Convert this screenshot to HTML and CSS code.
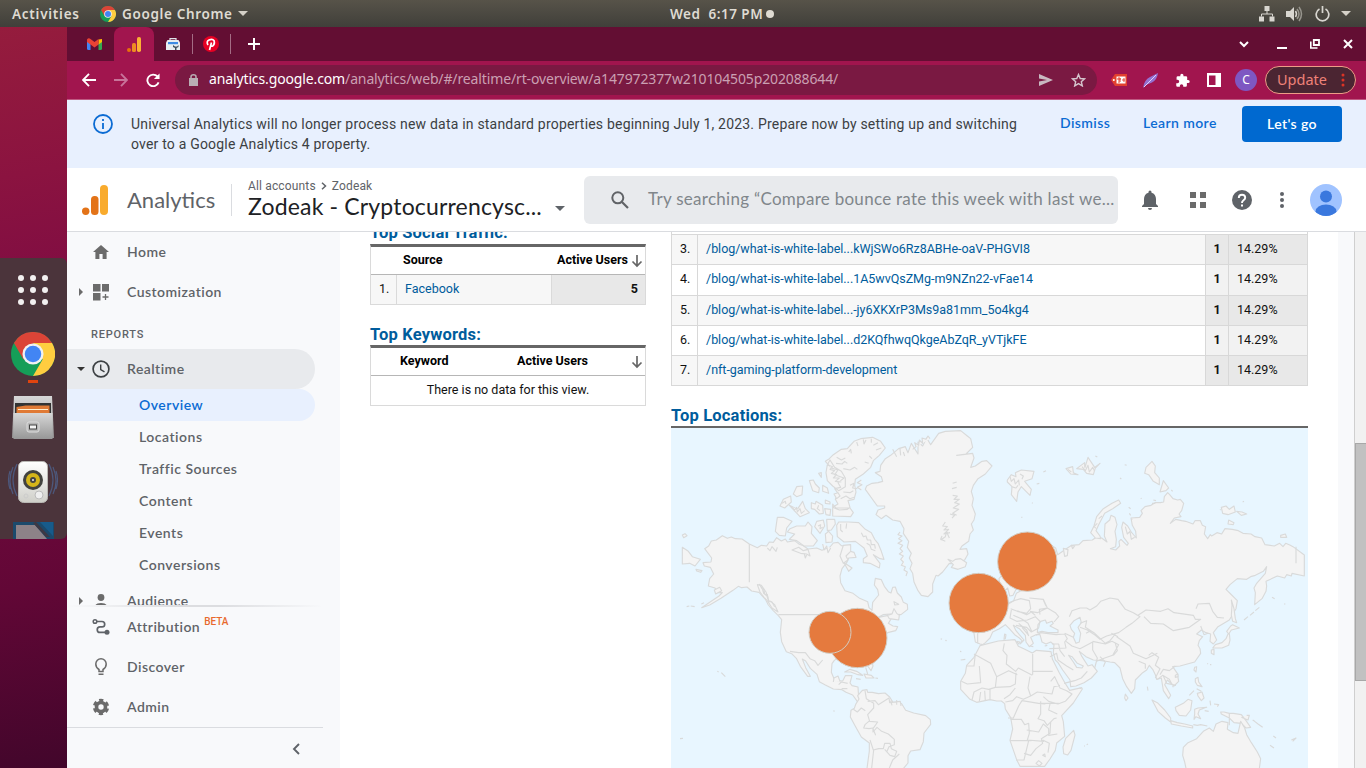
FILE: index.html
```html
<!DOCTYPE html>
<html lang="en">
<head>
<meta charset="utf-8">
<title>Analytics</title>
<link rel="stylesheet" href="styles.css">
</head>
<body>
<svg width="0" height="0" class="defs">
  <defs>
    <symbol id="chrome" viewBox="0 0 48 48">
      <circle cx="24" cy="24" r="24" fill="#159e58"/>
      <path d="M24 12H44.800A24 24 0 0 1 24 48L34.500 30Z" fill="#ffcd40"/>
      <path d="M3.200 12L13.600 30L24 24L24 12H44.800A24 24 0 0 0 3.200 12Z" fill="#db4437"/>
      <circle cx="24" cy="24" r="11.500" fill="#f1f1f1"/>
      <circle cx="24" cy="24" r="9" fill="#4285f4"/>
    </symbol>
    <symbol id="down" viewBox="0 0 12 14"><path d="M6 1V12M1.500 7.500L6 12L10.500 7.500" fill="none" stroke="#666" stroke-width="1.700"/></symbol>
  </defs>
</svg>

<header class="system">
  <span class="act">Activities</span>
  <svg class="sys-chrome" width="16" height="16"><use href="#chrome"/></svg>
  <span class="app">Google Chrome</span>
  <i class="tri light"></i>
  <span class="clock">Wed&nbsp; 6:17 PM<b></b></span>
  <div class="tray">
    <svg width="16" height="16" viewBox="0 0 16 16"><path d="M5.500 0h5v5h-5zM0 10.500h5v5H0zM10.500 10.500h5v5h-5z" fill="#d8d6d0"/><path d="M8 5v3M2.500 10.500V8h11v2.500" fill="none" stroke="#d8d6d0"/></svg>
    <svg width="17" height="16" viewBox="0 0 17 16"><path d="M0 5h4l4-4v14l-4-4H0z" fill="#d8d6d0"/><path d="M9.500 5q2 3 0 6" fill="none" stroke="#d8d6d0" stroke-width="1.500"/><path d="M11 3q4 5 0 10M13 1q5 7 0 14" fill="none" stroke="#97958d" stroke-width="1.500"/></svg>
    <svg width="15" height="16" viewBox="0 0 15 16"><path d="M4.500 3A6.300 6.300 0 1 0 10.500 3M7.500 0v7" fill="none" stroke="#d8d6d0" stroke-width="1.700"/></svg>
    <i class="tri light"></i>
  </div>
</header>

<div class="desktop">
  <aside class="launcher">
    <div class="dock">
      <svg width="67" height="281" viewBox="0 258 67 281">
        <defs>
          <linearGradient id="cab" x2="0" y2="1"><stop stop-color="#d7d7d7"/><stop offset="1" stop-color="#979797"/></linearGradient>
          <linearGradient id="spk" x2="0" y2="1"><stop stop-color="#fff"/><stop offset="1" stop-color="#cfcfc9"/></linearGradient>
        </defs>
        <g fill="#f2f0f0"><circle cx="21" cy="278" r="3"/><circle cx="33" cy="278" r="3"/><circle cx="45" cy="278" r="3"/><circle cx="21" cy="290" r="3"/><circle cx="33" cy="290" r="3"/><circle cx="45" cy="290" r="3"/><circle cx="21" cy="302" r="3"/><circle cx="33" cy="302" r="3"/><circle cx="45" cy="302" r="3"/></g>
        <use href="#chrome" x="11" y="332" width="44" height="44"/>
        <path d="M28 380h10v3H28z" fill="#e0440f"/>
        <path d="M14 396h38l2 42H12z" fill="url(#cab)"/><path d="M15 403h36v11H15z" fill="#333"/><path d="M16.500 407l9-1.500h24v8h-33z" fill="#e07a35"/><path d="M18 409.500h30" stroke="#fff0d0"/>
        <path d="M13.500 413h39v26h-39z" fill="url(#cab)"/><rect x="27" y="422" width="12" height="10" rx="2" fill="#b5b5b5" stroke="#ddd"/><rect x="29.500" y="425" width="7" height="4" fill="#f4f4f4" stroke="#444"/>
        <g fill="none" stroke="#4d587c" stroke-width="1.200"><path d="M17 464q-8 16 0 32M13 467q-6 14 0 27M10 471q-3 9 0 18M49 464q8 16 0 32M53 467q6 14 0 27M56 471q3 9 0 18"/></g>
        <rect x="18.500" y="461.500" width="29" height="41" rx="5" fill="url(#spk)" stroke="#b9b8b4"/>
        <circle cx="33" cy="480" r="10" fill="#42423f"/><circle cx="33" cy="480" r="7" fill="#d5b51a"/><circle cx="33" cy="480" r="3" fill="#444"/><circle cx="33" cy="480" r="1" fill="#eee"/>
        <circle cx="39" cy="495" r="4" fill="#eee" stroke="#bbb"/><circle cx="26" cy="496" r="2" fill="none" stroke="#ccc"/>
        <path d="M13 539V522h41v17z" fill="#1c4a6c"/><path d="M16 539V525h19l12 14z" fill="#8d8288"/><path d="M36 522l14 15h-4L33 523z" fill="#3d3844"/><path d="M40 522h13v14z" fill="#175b8b"/>
      </svg>
    </div>
  </aside>

  <section class="browser">
    <div class="tabs">
      <div class="tab"><svg width="15" height="12" viewBox="0 0 15 12"><path d="M0 2v8.500Q0 12 1.500 12H3.500V5z" fill="#4285f4"/><path d="M15 2v8.500Q15 12 13.500 12h-2V5z" fill="#34a853"/><path d="M11.500 1.500L15 1v3l-3.500 2.500z" fill="#fbbc04"/><path d="M0 4V1.500Q1.500-.5 3.500 1l4 3 4-3V6.500l-4 3-4-3z" fill="#ea4335"/></svg></div>
      <div class="tab active"><svg width="14" height="15" viewBox="0 0 14 15"><circle cx="2" cy="13" r="2" fill="#e8710a"/><rect x="5" y="6" width="4" height="9" rx="1.500" fill="#ed8b22"/><rect x="10" y="0" width="4" height="15" rx="1.800" fill="#fbb034"/></svg></div>
      <div class="tab line"><svg width="14" height="12" viewBox="0 0 14 12"><path d="M4 2.500V.6h6v1.900" fill="none" stroke="#dfe5ea" stroke-width="1.200"/><path d="M1.500 2h11L14 4.500V12H0V4.500z" fill="#e8edf1"/><path d="M2 4h10v2.200H2z" fill="#3d8ae4"/><path d="M7 7v2l2 1v2h1.500v-2l2-1V7l-1.500 1.500h-2z" fill="#3f4f5d"/></svg></div>
      <div class="tab line"><svg width="16" height="16" viewBox="0 0 16 16"><circle cx="8" cy="8" r="8" fill="#e60023"/><path d="M6.500 14L8.500 6.500M5 9Q3 5.500 6 4.100Q9.500 2.500 11.100 4.700Q12 8 10 9.700Q8.500 10.800 7.500 9.500" fill="none" stroke="#fff" stroke-width="1.700"/></svg></div>
      <svg class="plus" width="12" height="12" viewBox="0 0 12 12"><path d="M6 0v12M0 6h12" stroke="#fff" stroke-width="2"/></svg>
      <div class="winctl">
        <svg width="10" height="12" viewBox="0 0 10 12"><path d="M1 4l4 4 4-4" fill="none" stroke="#fff" stroke-width="2"/></svg>
        <svg width="10" height="12" viewBox="0 0 10 12"><path d="M0 10h10" stroke="#fff" stroke-width="2"/></svg>
        <svg width="10" height="12" viewBox="0 0 10 12"><path d="M3.800 2h5.200v5H3.800z" fill="none" stroke="#fff" stroke-width="1.800"/><path d="M.8 3.500V10H7.500" fill="none" stroke="#fff" stroke-width="1.600"/></svg>
        <svg width="10" height="12" viewBox="0 0 10 12"><path d="M1 2l8 8M9 2l-8 8" stroke="#fff" stroke-width="2"/></svg>
      </div>
    </div>

    <div class="toolbar">
      <svg class="nav-i" width="14" height="14" viewBox="0 0 14 14"><path d="M14 7H1.500M7 .8L1 7l6 6.200" fill="none" stroke="#fff" stroke-width="1.900"/></svg>
      <svg class="nav-i" width="14" height="14" viewBox="0 0 14 14"><path d="M0 7h12.500M7 .8L13 7l-6 6.200" fill="none" stroke="#c8749a" stroke-width="1.900"/></svg>
      <svg class="nav-i" width="14" height="15" viewBox="0 0 15 15"><path d="M12.300 3.200A6.200 6.200 0 1 0 13.500 9.500" fill="none" stroke="#fff" stroke-width="2"/><path d="M14.500 0v6h-6z" fill="#fff"/></svg>
      <div class="omni">
        <svg width="9" height="12" viewBox="0 0 9 12"><path d="M0 4h9v8H0z" fill="#b9aeb4"/><path d="M2 4.500V2.700Q2 .8 4.500.8T7 2.700V4.500" fill="none" stroke="#b9aeb4" stroke-width="1.500"/></svg>
        <span class="url"><b>analytics.google.com</b>/analytics/web/#/realtime/rt-overview/a147972377w210104505p202088644/</span>
        <svg class="send" width="14" height="12" viewBox="0 0 14 12"><path d="M0 0l14 6L0 12V7.500L8 6 0 4.500z" fill="#c9b9c1"/></svg>
        <svg width="15" height="14" viewBox="0 0 15 14"><path d="M7.500 1.500l1.700 4 4.300.4-3.200 2.800 1 4.200-3.800-2.300L3.700 12.900l1-4.200L1.500 5.900l4.300-.4z" fill="none" stroke="#d5c5cd" stroke-width="1.400"/></svg>
      </div>
      <svg class="e1" width="16" height="12" viewBox="0 0 16 12"><path d="M0 6l4-6h12v12H4z" fill="#e2402f"/><path d="M5.500 2.500h9v7h-9z" fill="#fff"/><path d="M7 4h2v2H7V4M9 4v4H7M13.200 4.500v3L11.500 6z" fill="none" stroke="#e2402f"/><circle cx="2.800" cy="6" r="1" fill="#fff"/></svg>
      <svg class="e2" width="15" height="15" viewBox="0 0 15 15"><path d="M0 15Q1 7 7 4L15 0Q14 7 9 9.500L3 12z" fill="#9471d0"/><path d="M1 14L13 2" stroke="#ded0fa"/></svg>
      <svg class="e3" width="15" height="15" viewBox="0 0 24 24"><path d="M21 11h-1.500V7a2 2 0 0 0-2-2h-4V3.500a2.500 2.500 0 0 0-5 0V5h-4a2 2 0 0 0-2 2v3.800H4a2.700 2.700 0 0 1 0 5.400H2V20a2 2 0 0 0 2 2h3.800v-1.500a2.700 2.700 0 0 1 5.400 0V22H17a2 2 0 0 0 2-2v-4h2a2.500 2.500 0 0 0 0-5z" fill="#fff"/></svg>
      <svg class="e4" width="14" height="14" viewBox="0 0 14 14"><path d="M0 0h14v14H0zM2 2.500v9.500h6.500V2.500z" fill="#fff" fill-rule="evenodd"/></svg>
      <span class="profile">C</span>
      <span class="update">Update<svg width="4" height="14" viewBox="0 0 4 14"><g fill="#dc3326"><circle cx="2" cy="2" r="1.500"/><circle cx="2" cy="7" r="1.500"/><circle cx="2" cy="12" r="1.500"/></g></svg></span>
    </div>

    <div class="notice">
      <svg width="20" height="20" viewBox="0 0 20 20"><circle cx="10" cy="10" r="9" fill="none" stroke="#0b6bd3" stroke-width="1.800"/><path d="M10 9v6M10 5v2" stroke="#0b6bd3" stroke-width="1.800"/></svg>
      <p>Universal Analytics will no longer process new data in standard properties beginning July 1, 2023. Prepare now by setting up and switching<br>over to a Google Analytics 4 property.</p>
      <a class="dismiss">Dismiss</a><a class="learn">Learn more</a><button>Let's go</button>
    </div>

    <div class="appbar">
      <svg class="logo" width="26" height="30" viewBox="0 0 26 30"><circle cx="3.700" cy="26.300" r="3.700" fill="#e37318"/><rect x="9" y="11" width="7.500" height="19" rx="3.500" fill="#e37318"/><rect x="18" y="0" width="8" height="30" rx="4" fill="#f9ab2d"/></svg>
      <span class="brand">Analytics</span>
      <div class="account">
        <div class="crumbs">All accounts <svg width="6" height="8" viewBox="0 0 6 8"><path d="M1 .8L4.500 4 1 7.200" fill="none" stroke="#5f6368" stroke-width="1.500"/></svg> Zodeak</div>
        <div class="prop">Zodeak - Cryptocurrencysc...</div>
      </div>
      <i class="tri dark"></i>
      <div class="search"><svg width="18" height="18" viewBox="0 0 18 18"><circle cx="6.800" cy="6.800" r="5.500" fill="none" stroke="#606367" stroke-width="2"/><path d="M11 11l6 6" stroke="#606367" stroke-width="2.200"/></svg><span>Try searching “Compare bounce rate this week with last we...</span></div>
      <svg class="bell" width="16" height="20" viewBox="0 0 16 20"><path d="M8 20a2 2 0 0 0 2-2H6a2 2 0 0 0 2 2zm6-6V9c0-3-1.600-5.600-4.500-6.300V2a1.500 1.500 0 0 0-3 0v.7C3.600 3.400 2 6 2 9v5l-2 2v1h16v-1z" fill="#5f6368"/></svg>
      <svg class="squares" width="16" height="16" viewBox="0 0 16 16"><path d="M0 0h6v6H0zM10 0h6v6h-6zM0 10h6v6H0zM10 10h6v6h-6z" fill="#6b6b6b"/></svg>
      <svg class="help" width="20" height="20" viewBox="0 0 20 20"><circle cx="10" cy="10" r="10" fill="#5f6368"/><path d="M6.800 8Q6.800 4.800 10 4.800T13.200 7.700Q13.200 9 11.500 10.200T10 13" fill="none" stroke="#fff" stroke-width="1.900"/><path d="M9 14.500h2v2H9z" fill="#fff"/></svg>
      <svg class="more" width="4" height="16" viewBox="0 0 4 16"><g fill="#5f6368"><circle cx="2" cy="2" r="2"/><circle cx="2" cy="8" r="2"/><circle cx="2" cy="14" r="2"/></g></svg>
      <svg class="avatar" width="32" height="32" viewBox="0 0 32 32"><defs><clipPath id="av"><circle cx="16" cy="16" r="16"/></clipPath></defs><g clip-path="url(#av)"><path d="M0 0h32v32H0z" fill="#a0c3ff"/><circle cx="16" cy="12.500" r="6" fill="#3a78de"/><ellipse cx="16" cy="27.500" rx="10.500" ry="7" fill="#3a78de"/></g></svg>
    </div>

    <div class="main">
      <nav class="side">
        <div class="side-scroll">
          <div class="item"><i class="arrow"></i><svg width="18" height="18" viewBox="0 0 18 18"><path d="M9 2l8 7h-2.400v7h-4v-5H7.400v5h-4V9H1z" fill="#6b6b6b"/></svg><span>Home</span></div>
          <div class="item"><i class="arrow closed"></i><svg width="18" height="18" viewBox="0 0 18 18"><path d="M1 1h7.500v7.500H1zM10 1h7v7.500h-7zM1 10h7.500v7.500H1z" fill="#6b6b6b"/><path d="M13.500 11v6M10.500 14h6" stroke="#6b6b6b" stroke-width="1.300"/></svg><span>Customization</span></div>
          <div class="section">REPORTS</div>
          <div class="item open"><i class="arrow downward"></i><svg width="18" height="18" viewBox="0 0 18 18"><circle cx="9" cy="9" r="7.900" fill="none" stroke="#3c4043" stroke-width="1.700"/><path d="M8.700 4.500v5l3.800 2.300" fill="none" stroke="#3c4043" stroke-width="1.400"/></svg><span>Realtime</span></div>
          <div class="sub current">Overview</div>
          <div class="sub">Locations</div>
          <div class="sub">Traffic Sources</div>
          <div class="sub">Content</div>
          <div class="sub">Events</div>
          <div class="sub">Conversions</div>
          <div class="item"><i class="arrow closed"></i><svg width="18" height="18" viewBox="0 0 18 18"><circle cx="9" cy="5.500" r="3.400" fill="#6b6b6b"/><path d="M3 15q0-4 6-4t6 4z" fill="#6b6b6b"/></svg><span>Audience</span></div>
        </div>
        <div class="fade"></div>
        <div class="item"><i class="arrow"></i><svg width="18" height="18" viewBox="0 0 18 18"><path d="M4.500 3.500H10a2.700 2.700 0 0 1 0 5.400H8a2.700 2.700 0 0 0 0 5.500h6" fill="none" stroke="#5f6368" stroke-width="1.700"/><circle cx="3" cy="3.500" r="1.800" fill="#f8f9fb" stroke="#5f6368" stroke-width="1.500"/><circle cx="15" cy="14.300" r="2.500" fill="#5f6368"/></svg><span>Attribution <sup>BETA</sup></span></div>
        <div class="item"><i class="arrow"></i><svg width="18" height="18" viewBox="0 0 18 18"><path d="M7 13.500v-2Q3.800 9.700 3.800 6a5.200 5.200 0 0 1 10.400 0Q14.200 9.700 11 11.500v2zM6.500 16.300h5" fill="none" stroke="#6b6b6b" stroke-width="1.500"/></svg><span>Discover</span></div>
        <div class="item"><i class="arrow"></i><svg width="18" height="18" viewBox="0 0 18 18"><circle cx="9" cy="9" r="4.500" fill="none" stroke="#6b6b6b" stroke-width="3.600"/><circle cx="9" cy="9" r="6.800" fill="none" stroke="#6b6b6b" stroke-width="2.800" stroke-dasharray="4.120 3" stroke-dashoffset="-1.500"/></svg><span>Admin</span></div>
        <div class="collapse"><svg width="8" height="12" viewBox="0 0 8 12"><path d="M7 1L2 6l5 5" fill="none" stroke="#5f6368" stroke-width="1.900"/></svg></div>
      </nav>

      <div class="content">
        <div class="left">
          <h2>Top Social Traffic:</h2>
          <div class="table">
            <div class="thead"><span class="c-src">Source</span><span class="c-act">Active Users</span><svg width="12" height="14"><use href="#down"/></svg></div>
            <div class="trow"><span class="n">1.</span><a class="k">Facebook</a><b class="v">5</b></div>
          </div>
          <h2 class="kw">Top Keywords:</h2>
          <div class="table">
            <div class="thead key"><span class="c-key">Keyword</span><span class="c-act">Active Users</span><svg width="12" height="14"><use href="#down"/></svg></div>
            <div class="none">There is no data for this view.</div>
          </div>
        </div>
        <div class="right">
          <div class="pages">
            <div class="page"><span>3.</span><a>/blog/what-is-white-label...kWjSWo6Rz8ABHe-oaV-PHGVI8</a><b>1</b><em>14.29%</em></div>
            <div class="page"><span>4.</span><a>/blog/what-is-white-label...1A5wvQsZMg-m9NZn22-vFae14</a><b>1</b><em>14.29%</em></div>
            <div class="page"><span>5.</span><a>/blog/what-is-white-label...-jy6XKXrP3Ms9a81mm_5o4kg4</a><b>1</b><em>14.29%</em></div>
            <div class="page"><span>6.</span><a>/blog/what-is-white-label...d2KQfhwqQkgeAbZqR_yVTjkFE</a><b>1</b><em>14.29%</em></div>
            <div class="page"><span>7.</span><a>/nft-gaming-platform-development</a><b>1</b><em>14.29%</em></div>
          </div>
          <h2 class="loc">Top Locations:</h2>
          <svg class="map" width="637" height="340" viewBox="3 24 1911 1020">
            <g fill="#f4f4f4" stroke="#d9dada" stroke-width="3.400" stroke-linejoin="round">
              <!-- North America -->
              <path d="M104 386l12-8 8-15 15-3 18-13 15 8 12-4 12 5 20 1 22 15 24 11 12-7 16 2 8-12 12 1 10-14 14 10 12-6 6 9 22-4 14 11 12 4 14 10 26-3 16 7 24-10 10-12 14-2 10 10 16 2 8 14 14 4 6 15-22 2-6 14-14 18-6 22 2 20 13 24 24 8 20 15 24 10 4 18 9 8 2-24 8-10 10-12-3-16-10-14 3-20 18 4 9 20 12 16 8 4 5-17 8-1 6 18 12 12 6 16 12 6 1 15-20 16-32-2-22 2-14 8 30-6 10 8-10 16 14 8 14 2-6 12-24 6-14 14-6 18-16 12-10 14-4 16 6 26-6 14-10-14-4-16-34-4-28 2-22-8-12 9-7 10-2 26 10 24 24 2 8-16 20 0-6 22 6 8 18 4 2 32 12 12 14-2 10 8-12 4-14-6-12-2-16-22-20-8-12-8-26-2-24-12-18-10-7-22-20-18-14-22-10-6 10 26 14 26-8 0-22-30-12-24-14-14-16-6-14-30-4-28 4-38-10-12-16-16-14-16-8-16-20-22-22-4-14-12-16 2-10-4-16 12-36 24-34 20-24 8 22-15 30-20 10-10-14 0-8-14-20-6 4-22 12-14-10-20-18-4-4-10 24-2 2-12z"/>
              <path d="M37 382l18 12 12 16 24 8-16 20-16-8-22 2zM37 345l8-4 6 6-10 6zM78 448l18 4-4 5-12-4zM133 510l16-8 6 10-18 10zM262 494l12 2 14 20 8 24 18 14 10 22-18-12-14-22-10-10-12-16z"/>
              <path d="M238 372V487M325 584H545M360 694l26 4 20 0 14 18 14 6 10 14 14-16M490 786l2-12 12-6 6 16M506 794l8-8 19 4M515 806l17 0"/>
              <path d="M268 492l8 14 6 2 2 14 8 2 4 18 10 4 8 14M275 500l6 20 10 8 6 20M292 384l8 8 6-12 12 14 4-12M402 398l4 16 4-10M458 372l4 18 8-12 4 20 8-14"/>
              <!-- Canadian islands -->
              <path d="M490 104l24-16 18-2 20-22 20-8 36-4 24 12 14 20-18 22-18 16-8 20-22 20-24 16-2 18 4 20-6 22-18 4 6 20-8 6-24 2-20-8 16-10-8-14 8-18-10-14 18-4-8-14 18-14-28-10 10-14-20-6-18-20 12-8zM480 120l14 22 20 12 12 20 0 26-20 12-18-14-16-16-4-24 4-24zM488 252l10 12 42 0 10 14-8 12-54-2zM418 182l12-2 6 12 12 12-2 14-18-6zM458 196l14 8 4 16-18-6zM370 222l10-22 18-2-2 26-16 6zM330 258l10-20 22-10 2 18-20 18zM358 256l24 12 16-24 8 22 12 12-28 12zM424 248l12 4 2-8 20 12 2 24-12 2-14-14-10-2zM466 240l14 6 0 6-14-2zM464 266l18 2-2 18-12-2zM322 292l18 0 26 12-16 20-4 24-18-2-12-12z"/>
              <path d="M360 326l20-8 26 0 8-12 12 14-2 20 18 22-12 16-28 0-22-16-22-4 16-16-22-6zM440 304l20-4 4 18-14 22-16-20zM470 298l24 0 2 14-12 18-12 2zM466 342l10-8 12 14-2 18-18 2zM500 316l6-10 30 0 30 2 20 20 18 10 10 20 10 12 10 24 8 24-12-2-20-12 20 26-2 14-28-14-20-2 0-12 12-8-10-24-18-14-8-6-34 2-20-16zM520 376l22-2 0 20-14 14 6 12-14 10-10-22zM522 428l12 8 12 8-10 10zM366 390l20-8 14 10 14-4 6 20-10-6-18-2zM492 222l12-4 6 10-10 8zM446 160l8-2 0 14z"/>
              <path d="M500 112l14 8 12-6M498 130l18 2 8-8 8 6M520 146l20 4 14-8 8 6M536 96l6-8 2 12M560 66l4 12M580 58l2 14 6-12M604 56l0 12M624 68l-14 8M634 84l-16 6M606 116l-8-8M596 130l-12-4M574 180l-12 8 14 6-14 8 12 8M540 196l12-6-4 14 14 2M520 216l20 2 10-6M512 236l16-8 12 8 12-4M476 136l12 4-8 8 14 4-10 8 16 4-10 10 18 0-12 10 18 2M574 338l6 12 8-2 4 12 10 0 2 14 10 0 2 12M590 370l10 6 4 12 12 4M512 312l0 18 6 6M530 310l-2 16M366 262l8 8 6-8 2 14 8-10 4 14 10-8M336 250l10-6 2 8M446 256l-4 10 8 6M444 318l8-4-2 12 8-4"/>
              <path d="M652 586l14-4 6-16 8 14 8 6-2 14-12-2-16-2zM672 545l14 8-12 2zM524 756l16-8 20 6 18 12-14-2-22-8zM582 762l22 4 8 8-24 0zM558 776l14 2M616 774l8 1M587 742l6 20M580 726l4 4M142 754l4 2M154 758l12 12M490 872l4 2M30 956l9-1"/>
              <!-- Greenland -->
              <path d="M586 208l4-10 16-8 18-2 14-4-4-14-18-12 14-4 2-18 14-20 16-10 24-20 20-6 8 18 10-28 20 32 0-36 14 12 12-24 12 20 24-34 20-6 46-2 20 16 10 8 6 26-20 20-28 4 48-6 4 14-10 28 14-4 20-14 14-2 16 16-20 24-22 14-14 20-6 18 6 22-4 20 10 26-4 18-8 12 6 18-10 12-4 22-20 14-6 10 20-2 4 16-10 18-30 12-16-2-20 26-14 12-6-2-10 26 0 24-14 14-20-4-10-14-12-26-4-26-8-14 6-16-8-16 6-14-12-18 4-18-16-24 2-14-12-22-22-4-20-14-14 10-16-12 6-14 20-6 0-6-22 0z"/>
              <path d="M834 418l14 6 8-6 16-2 18 12-4 12-22 8-20-6 6-8zM690 336l-6 8 12 4-10 8 10 6-12 8 14 6-8 10 8 8-10 8 12 6-8 10 8 8-6 10 12 4-4 10 10 6-4 12M826 306l-8 12 14 2-10 10 14-2-14 14 18-4M812 360l14-10 4-14 8 18M816 348l-4 10 14 6M848 190l12-4M846 206l14-4M848 226l14 2-10 10 16 0-14 10 14 4-18 12 16 4-18 12 12 6M840 282l14 4-8 8M728 88l10-8-4-12 12 8 2-16 10 10-2-16 12 4 6-10 6 8M700 96l4 12M668 88l12 22M690 86l2 20"/>
              <!-- South America -->
              <path d="M563 827l14-16 14-2 2 8 14 0 18 4 20-2 14 12 10 16 26 4 12 20 24 8 36 8 14 12 1 14-20 26-2 26-10 24-28 4-8 14 0 22-20 24H590l8-60 0-24-24-18-18-32-15-28 2-20 10-6 4-12 10-16z"/>
              <path d="M585 812l4 24 22 14 0 14-18 20 6 20 24 2-14 20 8 20M593 844l22-2 10 12 32-20 2 14 32-4 2 14M662 842l4 14M680 840l0 14M550 868l12 8 12-12 12 8M599 902l-14 12-4 10 16 2 12-2 0 12 12-14 14 12 20 8 18 16 0 16-16 6-6 14M600 960l10 30 16-4 14 0 4-16 16 0 4 16 16 8-6 16-14-4-16-18M658 1044l10-24 20-18M611 990l-6 54"/>
              <!-- Eurasia -->
              <path d="M912 640l4 26 14 6 8 2 8-6 14-14 8-18 20-10 18-12 14 14 14 16 14 10 8 8-6 10 12-12-14-16-10-12-8-16 18 10 18 20 2 20 10 14 12-10-8-18 16-8 12 0 6 22 12 6 14-6 10 8-2 24 6 22 8 8 14 22 22 30 2 20 16-2 24-10 22-14 18-20-16-20-12 4-18-28-8-16 20 16 22 10 26 2 24 4 14 2 16 16 8 32 12 24 14 20 10-14 2-26 22-22 12-8 8-14 10 12 8 16 4 14 14-4 6 38 16 24 6-10-10-18-8-14 8-14 20 18 14-14-4-24-14-20 22-2 44-12 18-26-2-14-6-10 4-14 10-12-18-8 14-12 14 8 14 4-2 22 10 8 10-12-10-22 14-18 34-20 20-34 4-24-20-20-14-14 12-14 22-18 28 2 12-8 14-4 24-12 10-14-4 20-26 30-8 14 4 14-2 36 22-18 12-22 2-16-2-14 34-16 22 6 6-10 14 4 2-8 37 8V405l-34-25-8-4-14-6-8 10-10-10-16 8-28-4-10-20-20-4-12-8-24-2-14-8-18-4-22-2-10 16-14-4-16 10-4-4-8 12-10-14 4-22-10-4-6-14-16 0-6 10-22-8-12-2-18-4-16 12 12-16 20-4-6-8 8-10 6-22-10-12-8 2-14-4-10-12-6-6-10 12-2 16-10 2-16 0-12 8-18 4-12 12 4 8-8 12-26 2 4 22 10 18 2 20-14-16-12-20-14-12-4 16 6 30 14 18-4 6-18-18-6 6 2 14-12 12-16-4 16-6 2-22-4-24 6-20-6-22-12-6-4 14-14 12-2 36 8 18-16-12-14-4-14 10-28 2-12 12-22 2-16 10-26 18-6-20-20-12-38-16-40 20-30 40-28 44-14 16 4 28 14 8 8-8 6 24 10-2 10-20 14-18 22-12 28 8 14 14-30 4-34 10-14 8-8 22-16 10-12 2-8 14-20 4-18 6-14 10 8 12-2 16-28 10-14-6z"/>
              <g fill="#e8f6ff"><path d="M1104 614l8-10 14-4 4 10 16-6 4 6-10 8 24 12 0 8-30 0-18-4-14 4zM1200 616l12-14 18-10 4 16-10 14 8 18-4 26-10 4-8-18 4-12-10-12zM1196 706l10 4 16 20 18 8-4 6-16-2-10-16z"/></g>
              <!-- Africa -->
              <path d="M930 677l-18 35-22 24-4 24-14 24 0 24 28 30 20 9 40-8 20 4 14 0 10 8 2 16 16 26 6 34-8 34 20 58 10 20h74l16-22 16-26 4-22 24-20-4-44-5-18 35-38 27-42-2-4-36 8-14-22-18-32-20-40-4-22-44-4-12 8-24-12-18-8-10-20-50 4zM1211 931l4 14-12 46-10 14-12-4-2-20 8-26z"/>
              <path d="M888 738h24l4-36M928 738l4 50-40 4-18-8M912 702l50 28 18 40 36-18 26 12M1003 670l-4 22 12 14-2 26 28 22 8-10 42 22M1088 702v62M1088 754h60M980 770l-4 32-20 6-20-4-24 12-6 24M932 816l-4 28M944 812l2 30M960 808l0 30M976 802l44-2 16-8 2-34M1036 804l-16 20-18 12M1080 770l-6 34 8 24-22 10-20-8-12 12-22 4M1082 828l20-12 44 6 6-22 18-4M1142 784l12-14 16 34 20 8 16 10-20 22-22 8-28-8-16-14M1126 852l-20-2-50-8-10 16-16 36-16 0M1112 844l0 38-8 14 18 6 10 14 20-20 8-2M1108 850h58M1140 852l-4 18 26 12M1022 898l32 0 10 16 12-4 2 30-6 20 50 4M1070 930l36 6 14-24 16 14 0 20 26-4M1020 962h44l20 0M1076 962l-14 58-24 0M1062 1000l20 6 16-20 20-16-4-14 26-16 2-34M1118 960l20 10-4 28M1098 1030l8-8 10 8-8 8zM1118 1006l6-4 2 8z" fill="none"/>
              <!-- Eurasian borders -->
              <path d="M923 640v30M1016 548l16-6 20-6 26 6 4 24-12 14-28-6-20-8M1024 570l-4 24 20 10M1042 572l28 12 14-8 12 10M1040 604l32-4 24-10 14 14-4 20-22 12-14-14-32-6M1030 586l24 10 20 14 12 26M1078 534l42 4 12 26-30 14-22-4M1120 540l8 18M1110 584l-2-16 24-4 24 14 10 12-14 16M1046 610l24 20 6 18M1056 622l20 24M1098 646l14-8 46 6 26-2 8 14-8 10 4 18-50 2M1184 640l26 12M1146 672l20 0 4 20 14 18M1188 664l18 14 24 8 38-20 0 24 14 24-8 30M1140 710l20-10 4 20 26 18 14 8 6 4M1182 790l32-8 20-8 18-20M1198 590l8-18 24-8 20 0 10 6 20-12 12-14 28-10 24 4 22 30 24 10 20 12-24 20-18 12-22 16-36 10-20 10-14-12-24-16-22-8M1230 610l20-8-4 20 26 16 34 32 14-8 16-20M1248 640l14-8M1268 664l38 8 20-8 20 10-18 32-24 8-24 10M1340 650l40 28 10 22 38 16 34-16M1324 640l20 10M1290 710l16 16-6 14M1330 706l12-14-6-22M1404 586l24-16 44 4 22-8 18 12 58 8 6 12 16 0-34 24-48 10-30-20-38-2-20-20M1578 566l6-14 34-2 10 24 14 18 20 2M1592 618l10 26 12-4M1406 724l20 8 0 14M1436 706l10-8 20 14-10 24 14 10-14 28M1462 778l16-12 20 12 12 24M1470 764l10-16 18 4 18-14M1480 768l10 22 28 6M1878 380v50" fill="none"/>
              <!-- Arctic Russia -->
              <path d="M1276 354l-14-16 10-20 8-28 20-24 26-16 20-10 6 10-24 16-24 14-18 34-8 18 12 16 2 8zM1012 180l12-16 14 6-2-12 18-8 38 4-6 22-22 8 20 24-4 18-12-12-14-14-10 16-4 28-16-20 2-24-14-14zM1188 146l20-6 2 18 14 6-22-2zM1220 146l24-18 0 18 10-34 20 30 16-12-14 14-6 20-20-4-10-12zM1424 160l4-18 18-18 10 14-2 20 14 16 0 20-18-10-14-20zM1470 216l10-34 16 22-8 8zM1654 262l14-4 10 10 14-10 4 18-22 8-16-4zM1700 274l16 2 14 6-16 4zM1676 300l16 8-2 6-16-2zM1832 346l14-4 4 10-18 0zM1180 385l14 4-2 18-8 2zM1204 376l10 2-6 8zM1120 156l8-4M1100 192l8-2M1086 248l2 2M1054 292h3M1276 108l6 3M1364 134l6 2M1350 174l4 3M1412 236l3-1M1450 240l8 2M1446 250l10 0M1376 262l6 4M1378 280l4 6M1384 298h3M1504 210l4 4M1650 268l2 2M1718 246l4-2"/>
              <path d="M1020 170l4 14 8-8 4 16 10-12 2 16M1050 162l10 6-4 10M1024 200l14 4 6-8M1194 148l10 8M1236 140l10 12 8-16 4 20 10-14 6 12M1282 310l-10 10 8 6M1296 288l-10 8M1366 320l6 22 8-8 4 24 10-6"/>
              <!-- Japan, SE Asia -->
              <path d="M1684 540l8 26 4 30 4 12-12-4-4-18 2-30zM1682 618l6-4 20 10-24 6-8 12-6-8zM1678 640l2 20-4 16-20 8-28 0 8-10 20-6 12-12 6-14zM1624 690l8-2 0 16-8-4zM1574 742l6-2-2 16-6-6zM1516 766l8-4 0 8-8 2zM1576 776l8-4 2 14 10 14-14-4-6-10zM1582 820l14-4 6 18-8 8-10-14zM1580 806l14 8M1558 826l14-14M1620 734h4M1612 730l2 2M1446 840l16 8 22 22 18 24 0 12-16-12-22-20zM1502 902l20 6 22 4 24 6 0 6-34-6-30-6zM1516 862l24-12 14-12 12 4-4 28-14 18-20-2-10-14zM1574 868l10-4 26-2-22 8-4 12 8 14-14-6-6 8 2-16zM1652 876l10 0 16 4 12 0 24 4 14 18 14 20-14 2-14-14-22-2-14-14-24-12zM1678 880v36M1714 892l20 8 4-14-8 0M1432 800l2 12M1570 914l12 2 10-2 20 4M1620 842l2 14M1632 852l14 2-4 6M1604 872l12 2M1748 900l6 4 10 8 14 10M1810 948l8 6M1800 976l12 8M1864 960l14-6-10 10M1242 978h3M1250 974l4-2M1366 822l8 12-6 8-4-8zM1228 804l6 2"/>
              <path d="M1722 600l12-10M1740 586l12-10M1756 572l12-10M1806 532l8 4M1842 552h4M1004 642l4 2-2 12-4 2zM1040 664l10 2-4 6zM1080 678l10 2M1124 678l8-2M50 560l8-2M62 558l12 2M94 552l8-4M812 656l4 2M826 661l4 1M870 694l4 1M872 720l14-2"/>
              <!-- Australia -->
              <path d="M1550 1054l-6-28-6-20 2-24 14-14 26-12 20-22 18-10 12 10 8-22 18-8 18 4-2 20 18 10 14 2 8-36 12 20 6 20 14 24 18 28 10 20-4 30z"/>
            </g>
            <g fill="#e57a3e" stroke="#d3cdc4" stroke-width="3"><circle cx="562" cy="654" r="89"/><circle cx="480" cy="637" r="63"/><circle cx="926" cy="549" r="89"/><circle cx="1072" cy="425" r="89"/></g>
          </svg>
        </div>
      </div>
      <div class="gutter"></div>
      <div class="scroll"><div class="thumb"></div></div>
    </div>
  </section>
</div>
</body>
</html>
```
FILE: styles.css
```css
* { box-sizing: border-box; }
body { margin: 0; width: 1366px; height: 768px; overflow: hidden; font-family: Roboto, sans-serif; display: flex; flex-direction: column; }
svg { display: block; flex: none; }
.defs { position: absolute; }
span, a { white-space: nowrap; }

.system { height: 27px; flex: none; background: linear-gradient(#575349, #403f3a); display: flex; align-items: center; color: #dfdbd2; font: 600 13.500px "Noto Sans", sans-serif; position: relative; padding: 0 15px 0 12px; }
.act { width: 88px; letter-spacing: .75px; }
.sys-chrome { margin-right: 6px; }
.app { width: 116px; letter-spacing: .65px; }
.tri { border: 5px solid transparent; border-bottom: 0; flex: none; }
.tri.light { border-top-color: #d5d1c8; }
.clock { position: absolute; left: 670px; display: flex; align-items: center; letter-spacing: .5px; }
.clock b { width: 8px; height: 8px; border-radius: 50%; background: #dfdbd2; margin-left: 3px; }
.tray { margin-left: auto; display: flex; align-items: center; gap: 11.500px; }

.desktop { flex: 1; display: flex; min-height: 0; }
.launcher { width: 67px; flex: none; padding-top: 231px; background: linear-gradient(170deg, #951c3d 0%, #8b1340 20%, #7c0b43 40%, #620736 75%, #42062b 100%); }
.dock { height: 281px; background: #4b343b; border-radius: 0 6px 6px 0; overflow: hidden; }

.browser { width: 1299px; display: flex; flex-direction: column; }
.tabs { height: 34px; flex: none; background: #630e33; display: flex; align-items: center; padding-left: 8px; }
.tab { width: 39px; height: 34px; display: flex; align-items: center; justify-content: center; position: relative; }
.tab.active { background: #a1154e; border-radius: 8px 8px 0 0; width: 40px; }
.tab.line { width: 38.500px; padding-right: 1px; }
.tab.line::after { content: ""; position: absolute; right: 0; top: 7px; width: 1px; height: 20px; background: #a46c84; }
.plus { margin-left: 17px; }
.winctl { margin-left: auto; display: flex; gap: 23px; padding-right: 13px; }
.winctl svg:first-child { margin-right: 5px; }
.toolbar { height: 39px; flex: none; background: #a1154e; border-bottom: 1px solid #be5a82; display: flex; align-items: center; padding-left: 15px; }
.nav-i { margin-right: 18px; }
.omni { width: 922px; height: 30px; margin-left: -3px; border-radius: 15px; background: #7a1942; display: flex; align-items: center; padding: 0 11px 0 14px; }
.url { margin-left: 11px; font: 14px/18px "Noto Sans", sans-serif; color: #caa0b2; letter-spacing: -.13px; margin-top: -2px; }
.url b { font-weight: 400; color: #fff; }
.send { margin-left: auto; margin-right: 18px; }
.e1 { margin-left: 14px; } .e2 { margin-left: 16px; } .e3 { margin-left: 17px; } .e4 { margin-left: 17px; }
.profile { width: 22px; height: 22px; border-radius: 50%; background: #7e57c2; color: #fff; font: 12px/22px "Noto Sans", sans-serif; text-align: center; margin-left: 14px; }
.update { width: 91px; height: 28px; margin-left: 8px; border: 1px solid #ee9c86; border-radius: 14px; background: #4b2532; color: #ef8279; font: 14.500px/25px "Noto Sans", sans-serif; padding: 0 10px 0 11px; display: flex; justify-content: space-between; }
.update svg { margin-top: 6px; }

.notice { height: 68px; flex: none; background: #e8f0fe; display: flex; align-items: flex-start; padding: 6px 24px 0 26px; color: #3c4043; }
.notice > svg { margin-top: 8px; }
.notice p { margin: 8px 0 0 18px; width: 929px; font-size: 14px; line-height: 20px; white-space: nowrap; letter-spacing: .2px; }
.notice a, .notice button { font: 600 14px/34px Lato, sans-serif; color: #0b6bd3; letter-spacing: .4px; }
.dismiss { width: 83px; } .learn { width: 99px; }
.notice button { width: 100px; height: 36px; border: 0; border-radius: 4px; background: #0069d0; color: #fff; padding: 0; }

.appbar { height: 64px; flex: none; background: #fff; border-bottom: 1px solid #dadce0; display: flex; align-items: center; padding-left: 15px; font-family: Lato, sans-serif; color: #5f6368; }
.brand { margin-left: 19px; width: 104px; font-size: 22px; }
.account { border-left: 1px solid #dadce0; height: 32px; width: 324px; padding-left: 16px; }
.crumbs { font: 12px/14px Roboto, sans-serif; margin-top: -5px; display: flex; gap: 5px; align-items: center; white-space: nowrap; letter-spacing: .15px; }
.prop { font-size: 23px; line-height: 27px; color: #202124; white-space: nowrap; letter-spacing: .17px; }
.tri.dark { border-top-color: #5f6368; margin-top: 17px; }
.search { width: 534px; height: 48px; margin-left: 19px; background: #e8eaed; border-radius: 6px; display: flex; align-items: center; padding-left: 27px; font-size: 17px; color: #80868b; letter-spacing: .28px; }
.search span { margin: -2px 0 0 19px; }
.bell { margin-left: 24px; } .squares { margin-left: 32px; } .help { margin-left: 26px; } .more { margin-left: 28px; } .avatar { margin-left: 26px; }

.main { flex: 1; display: flex; min-height: 0; background: #fff; }
.side { width: 273px; flex: none; background: #f8f9fb; font: 600 14px Lato, sans-serif; color: #5f6368; display: flex; flex-direction: column; }
.side-scroll { height: 373px; overflow: hidden; flex: none; }
.item { height: 40px; width: 248px; display: flex; align-items: center; flex: none; padding-left: 8px; }
.item span { margin: -2px 0 0 17px; letter-spacing: .45px; }
.arrow { width: 17px; height: 10px; flex: none; display: flex; align-items: center; padding-left: 4px; }
.arrow.closed::before { content: ""; border: 4px solid transparent; border-left-color: #6b6b6b; border-right: 0; }
.arrow.downward { padding-left: 2px; }
.arrow.downward::before { content: ""; border: 4px solid transparent; border-top-color: #333; border-bottom: 0; }
.open { background: #e8eaed; border-radius: 0 20px 20px 0; }
.section { height: 37px; padding: 15px 0 0 24px; font: 500 11px/15px Roboto, sans-serif; letter-spacing: .8px; }
.sub { height: 32px; width: 248px; line-height: 32px; padding-left: 72px; letter-spacing: .5px; }
.current { background: #e8f0fe; color: #0b6bd3; border-radius: 0 16px 16px 0; }
.fade { height: 2px; flex: none; width: 256px; background: linear-gradient(90deg, transparent, #dcdde0 45%, #dcdde0 60%, transparent); }
sup { font: 500 10px/10px Roboto, sans-serif; color: #e8692d; vertical-align: 7px; letter-spacing: 0; }
.collapse { width: 256px; border-top: 1px solid #dadce0; flex: 1; padding: 15px 0 0 225px; }

.content { width: 998px; flex: none; padding-left: 30px; display: flex; gap: 25px; overflow: hidden; font-size: 12.500px; color: #111; }
.left { width: 276px; flex: none; }
h2 { margin: 0; height: 24px; font: 700 16.500px/24px Roboto, sans-serif; letter-spacing: .18px; color: #005c9c; }
.left h2:first-child { height: 26px; margin-top: -14px; padding-top: 3px; }
h2.kw { height: 40px; padding-top: 18px; }
.table { border: 1px solid #dadada; border-top: 3px solid #666; height: 61px; }
.thead { height: 28px; border-bottom: 1px solid #b6b6b6; display: flex; align-items: center; font-weight: 700; color: #000; padding-bottom: 2px; }
.c-src { margin-left: 32px; width: 154px; }
.c-key { margin-left: 29px; width: 117px; }
.thead svg { margin-left: auto; margin-right: 2px; margin-top: 2px; }
.trow { height: 29px; display: flex; line-height: 28px; background: #f7f7f7; }
.n { width: 26px; border-right: 1px solid #dadada; padding-left: 8px; }
.k { width: 154px; padding-left: 8px; color: #005c9c; }
.v { flex: 1; border-left: 1px solid #dadada; background: #e8e8e8; text-align: right; padding-right: 7px; }
.none { line-height: 27px; text-align: center; }
.right { width: 637px; flex: none; }
.pages { border: 1px solid #d8d8d8; border-top: 0; height: 154px; padding-top: 2px; }
.page { height: 30.300px; border-top: 1px solid #d8d8d8; display: flex; line-height: 28px; background: #fff; }
.page span { width: 26px; border-right: 1px solid #d8d8d8; padding-left: 8px; }
.page a { flex: 1; padding-left: 8px; color: #005c9c; letter-spacing: -.03px; }
.page b { width: 24px; border: 1px solid #d8d8d8; border-width: 0 1px; text-align: center; background: #f2f2f2; }
.page em { font-style: normal; width: 78px; padding-left: 8px; background: #f2f2f2; }
.page:nth-child(odd) { background: #f7f7f7; }
.page:nth-child(odd) b, .page:nth-child(odd) em { background: #e8e8e8; }
h2.loc { height: 42px; padding-top: 18px; border-bottom: 2px solid #666; }
.map { background: #e8f6ff; }
.gutter { width: 16px; background: #f8f9fb; }
.scroll { width: 12px; background: #f1f1f1; border-left: 1px solid #cfcfcf; padding-top: 211px; }
.thumb { height: 238px; background: #c1c1c1; border: 1px solid #a8a8a8; border-right: 0; }
```
